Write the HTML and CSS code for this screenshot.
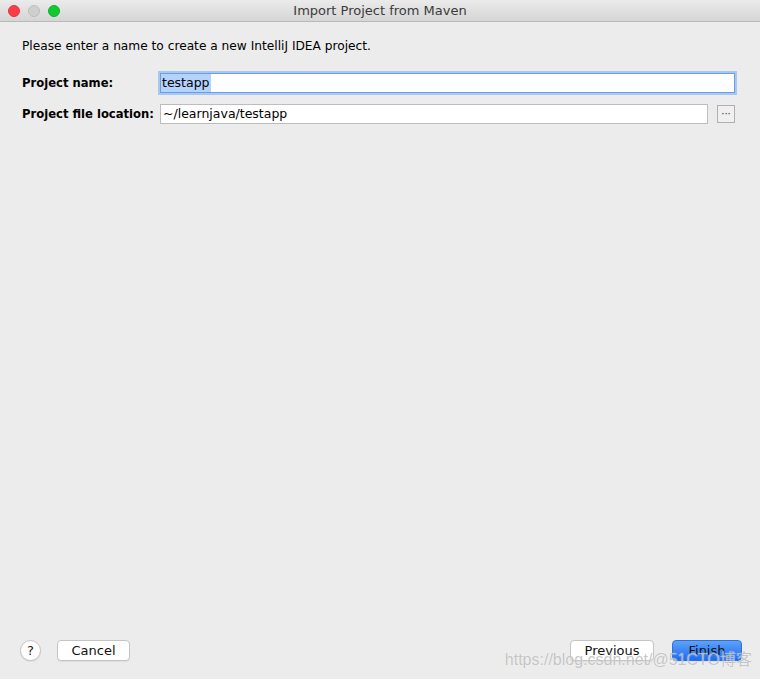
FILE: index.html
```html
<!DOCTYPE html>
<html>
<head>
<meta charset="utf-8">
<link rel="stylesheet" href="styles.css">
</head>
<body>
<div class="window">
  <div class="titlebar">
    <div class="lights">
      <span class="light red"></span>
      <span class="light gray"></span>
      <span class="light green"></span>
    </div>
    <div class="title">Import Project from Maven</div>
  </div>
  <div class="content">
    <p class="intro">Please enter a name to create a new IntelliJ IDEA project.</p>
    <div class="form">
      <label class="label">Project name:</label>
      <div class="field focused"><span class="sel">testapp</span></div>
      <label class="label">Project file location:</label>
      <div class="field-row">
        <div class="field">~/learnjava/testapp</div>
        <button class="browse">&middot;&middot;&middot;</button>
      </div>
    </div>
  </div>
  <div class="footer">
    <div class="left">
      <button class="help">?</button>
      <button class="btn">Cancel</button>
    </div>
    <div class="right">
      <button class="btn prev">Previous</button>
      <button class="btn primary">Finish</button>
    </div>
  </div>
  <div class="watermark">https://blog.csdn.net/@51CTO博客</div>
</div>
</body>
</html>
```
FILE: styles.css
```css
html, body {
  margin: 0;
  padding: 0;
  background: #ececec;
}
body {
  font-family: "DejaVu Sans", "Noto Sans CJK SC", sans-serif;
  font-size: 12px;
  color: #000;
}
.window {
  position: relative;
  width: 760px;
  height: 679px;
  background: #ececec;
  display: flex;
  flex-direction: column;
  overflow: hidden;
  border-radius: 0 0 5px 5px;
}
.titlebar {
  position: relative;
  height: 21px;
  flex: 0 0 21px;
  background: linear-gradient(#ebebeb, #d5d5d5);
  border-bottom: 1px solid #b9b9b9;
  display: flex;
  align-items: center;
  justify-content: center;
}
.lights {
  position: absolute;
  left: 8px;
  top: 5px;
  display: flex;
  gap: 8px;
}
.light {
  width: 12px;
  height: 12px;
  border-radius: 50%;
  box-sizing: border-box;
}
.red { background: #fc3d47; border: 1px solid #e2353e; }
.gray { background: #cfcfcf; border: 1px solid #bdbdbd; }
.green { background: #13c930; border: 1px solid #10b02a; }
.title {
  font-size: 13px;
  color: #3b3b3b;
}
.content {
  flex: 1;
  padding: 0 25px 0 22px;
}
.intro {
  margin: 16px 0 19px;
  font-size: 12.2px;
  line-height: 16px;
}
.form {
  display: grid;
  grid-template-columns: 138px 1fr;
  row-gap: 11px;
  align-items: center;
}
.label {
  font-weight: bold;
  font-size: 11.6px;
}
.field {
  height: 20px;
  box-sizing: border-box;
  border: 1px solid #bdbdbd;
  background: #fff;
  padding: 0 2px;
  line-height: 18px;
  font-size: 12.5px;
}
.field.focused {
  border: 1px solid #6c9fe0;
  box-shadow: 0 0 0 2px #a6c8f3;
  padding-left: 0;
}
.sel {
  background: #b3d3fd;
  padding: 0 1px;
  display: inline-block;
  line-height: 18px;
}
.field-row {
  display: flex;
  align-items: center;
  gap: 9px;
}
.field-row .field {
  flex: 1;
}
.browse {
  width: 18px;
  height: 18px;
  padding: 0;
  border: 1px solid #b0b0b0;
  background: #f0f0f0;
  font-size: 10px;
  line-height: 14px;
  color: #333;
  font-family: "DejaVu Sans", sans-serif;
}
.footer {
  height: 39px;
  flex: 0 0 39px;
  display: flex;
  justify-content: space-between;
  align-items: flex-start;
  padding: 0 18px 0 20px;
}
.left, .right {
  display: flex;
  align-items: center;
}
.left { gap: 16px; }
.right { gap: 18px; }
.help {
  width: 21px;
  height: 21px;
  border-radius: 50%;
  border: 1px solid #c4c4c4;
  background: #fff;
  padding: 0;
  font-size: 13px;
  font-family: "DejaVu Sans", sans-serif;
  color: #222;
  box-shadow: 0 1px 1px rgba(0,0,0,0.08);
}
.btn {
  height: 21px;
  box-sizing: border-box;
  border: 1px solid #c4c4c4;
  border-radius: 4px;
  background: #fff;
  font-family: "DejaVu Sans", sans-serif;
  font-size: 13px;
  color: #111;
  padding: 0;
  width: 73px;
  line-height: 19px;
  box-shadow: 0 1px 1px rgba(0,0,0,0.06);
}
.btn.prev { width: 84px; }
.btn.primary {
  width: 70px;
  background: linear-gradient(#5fa2f8, #1a6bf5);
  border-color: #2b6fe0;
  color: #111;
}
.watermark {
  position: absolute;
  right: 8px;
  bottom: 9px;
  font-family: "Liberation Sans", "Noto Sans CJK SC", sans-serif;
  font-size: 16px;
  color: rgba(150,150,150,0.55);
  text-shadow: 0 0 1px rgba(255,255,255,0.9);
  pointer-events: none;
}
```
